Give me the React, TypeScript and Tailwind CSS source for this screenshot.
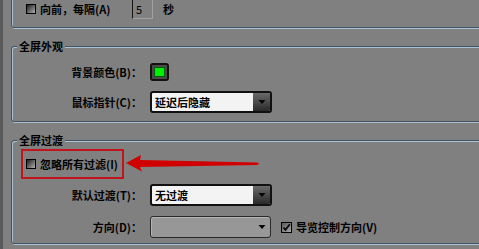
import type { ReactNode } from "react";

const etched =
  "rounded-[3px] border border-[#46535f] shadow-[inset_1px_1px_0_#a9c1d3,1px_1px_0_#a9c1d3]";

function CheckBox({ checked = false }: { checked?: boolean }) {
  if (checked) {
    return (
      <span className="flex h-[11px] w-[11px] shrink-0 items-center justify-center border border-black bg-[linear-gradient(135deg,#5a5a5a,#a8a8a8)]">
        <svg width="9" height="9" viewBox="0 0 9 9">
          <path d="M1.5 4.5 L3.5 6.8 L7.8 1.2" fill="none" stroke="#0a0a0a" strokeWidth="1.8" />
        </svg>
      </span>
    );
  }
  return (
    <span className="h-[10px] w-[10px] shrink-0 border border-black bg-[linear-gradient(135deg,#1c1c1c,#5e5e5e_45%,#b0b0b0)]" />
  );
}

function Arrow() {
  return (
    <svg width="10" height="6" viewBox="0 0 10 6">
      <path d="M1.5 1 H8.5 L5 5 Z" fill="#050505" />
    </svg>
  );
}

function Select({ text, disabled = false }: { text?: string; disabled?: boolean }) {
  if (disabled) {
    return (
      <div className="flex h-[22px] w-[121px] items-center justify-end rounded-[3px] border border-[#2a2a2a] bg-[#979797] pr-[3px] shadow-[inset_1px_1px_0_#b4b4b4]">
        <Arrow />
      </div>
    );
  }
  return (
    <div className="flex h-[22px] w-[122px] overflow-hidden rounded-[3px] border-2 border-[#111] bg-[#f3f3f3]">
      <span className="flex-1 pl-[3px] leading-[18px]">{text}</span>
      <span className="flex w-[17px] items-center justify-center bg-[linear-gradient(#6a6a6a,#2a2a2a)]">
        <Arrow />
      </span>
    </div>
  );
}

function Label({ children }: { children: ReactNode }) {
  return <span className="text-right">{children}</span>;
}

export default function App() {
  return (
    <div className="flex h-[249px] w-[479px] overflow-hidden bg-[#808080] font-['Noto_Sans_CJK_SC',sans-serif] text-[11px] leading-[14px] font-bold text-black">
      <div className="w-[3px] shrink-0 bg-[#5a5a5a]" />
      <div className="flex w-[520px] shrink-0 flex-col pl-[8px]">
        {/* group cut by the top edge */}
        <div className={`-mt-[12px] h-[40px] pt-[10px] ${etched}`}>
          <div className="flex h-[20px] items-center pl-[14px]">
            <CheckBox />
            <span className="ml-[4px] w-[92px]">向前，每隔(A)</span>
            <div className="flex h-[20px] w-[21px] items-center border border-[#a2a2a2] border-l-[#151515] pl-[3px] font-normal">
              5
            </div>
            <span className="ml-[10px]">秒</span>
          </div>
        </div>

        <fieldset className={`mt-[11px] pb-[8px] ${etched}`}>
          <legend className="ml-[5px] bg-[#808080] px-[2px] leading-[15px]">全屏外观</legend>
          <div className="grid grid-cols-[130px_auto] items-center gap-x-[8px] gap-y-[10px] pt-[9px]">
            <Label>背景颜色(B)：</Label>
            <span className="flex h-[18px] w-[19px] items-center justify-center rounded-[3px] border-2 border-[#111] bg-[#4a4a4a]">
              <span className="h-[10px] w-[11px] border border-[#0b5a0b] bg-[#00ee00]" />
            </span>
            <Label>鼠标指针(C)：</Label>
            <Select text="延迟后隐藏" />
          </div>
        </fieldset>

        <fieldset className={`mt-[11px] pb-[5px] ${etched}`}>
          <legend className="ml-[5px] bg-[#808080] px-[2px] leading-[15px]">全屏过渡</legend>
          <div className="mt-[1px] ml-[9px] flex items-center">
            <div className="flex h-[30px] w-[103px] items-center border-2 border-[#c2141a] pl-[3px]">
              <CheckBox />
              <span className="ml-[4px]">忽略所有过滤(I)</span>
            </div>
            <svg className="ml-[2px]" width="136" height="26" viewBox="0 0 136 26">
              <path
                d="M0 12 L15 4 L14 9 L131 11.6 Q135 12.6 131 13.9 L14 16 L16 20.5 Z"
                fill="#d10000"
              />
            </svg>
          </div>
          <div className="mt-[5px] grid grid-cols-[130px_auto] items-center gap-x-[8px] gap-y-[10px]">
            <Label>默认过渡(T)：</Label>
            <Select text="无过渡" />
            <Label>方向(D)：</Label>
            <div className="flex items-center">
              <Select disabled />
              <span className="ml-[10px]">
                <CheckBox checked />
              </span>
              <span className="ml-[4px]">导览控制方向(V)</span>
            </div>
          </div>
        </fieldset>
      </div>
    </div>
  );
}
